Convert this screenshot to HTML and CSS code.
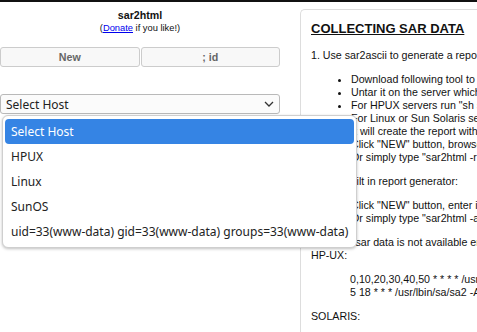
FILE: index.html
```html
<!DOCTYPE html>
<html>
<head>
<meta charset="utf-8">
<title>sar2html</title>
<link rel="stylesheet" href="styles.css">
</head>
<body>
<div class="topbar"></div>
<div class="page">
  <div class="left">
    <div class="title">sar2html</div>
    <div class="donate">(<a href="#">Donate</a> if you like!)</div>
    <div class="buttons">
      <button class="btn">New</button>
      <button class="btn">; id</button>
    </div>
    <div class="host">
      <div class="select">
        <span>Select Host</span>
        <svg class="chev" width="10" height="6" viewBox="0 0 10 6"><path d="M1 1 L5 5 L9 1" fill="none" stroke="#333" stroke-width="1.3"/></svg>
      </div>
      <div class="popup">
        <div class="opt active">Select Host</div>
        <div class="opt">HPUX</div>
        <div class="opt">Linux</div>
        <div class="opt">SunOS</div>
        <div class="opt">uid=33(www-data) gid=33(www-data) groups=33(www-data)</div>
      </div>
    </div>
  </div>
  <div class="panel">
    <h3 class="heading">COLLECTING SAR DATA</h3>
    <p class="para">1. Use sar2ascii to generate a report:</p>
    <ul class="list">
      <li>Download following tool to your server: sar2ascii.tar</li>
      <li>Untar it on the server which you want to collect sar data.</li>
      <li>For HPUX servers run "sh sar2ascii".</li>
      <li>For Linux or Sun Solaris servers run "bash sar2ascii".</li>
      <li>It will create the report with name sar2html-hostname-date.tar.gz under /tmp directory.</li>
      <li>Click "NEW" button, browse and select the report, click "Upload report" button to upload the data.</li>
      <li>Or simply type "sar2html -r sar2html-hostname-date.tar.gz" in command line.</li>
    </ul>
    <p class="para">2. Use built in report generator:</p>
    <ul class="list">
      <li>Click "NEW" button, enter ip address, user name and password of the server.</li>
      <li>Or simply type "sar2html -a" in command line.</li>
    </ul>
    <p class="para">NOTE: If sar data is not available enable sar collection:<br>HP-UX:</p>
    <div class="cron">0,10,20,30,40,50 * * * * /usr/lbin/sa/sa1<br>5 18 * * * /usr/lbin/sa/sa2 -A</div>
    <p class="para">SOLARIS:</p>
  </div>
</div>
</body>
</html>
```
FILE: styles.css
```css
html, body {
  margin: 0;
  padding: 0;
  overflow: hidden;
  background: #fff;
}
body {
  font-family: "Liberation Sans", Arial, sans-serif;
  color: #111;
  width: 477px;
  height: 332px;
}
.topbar {
  height: 2px;
  background: #111;
}
.page {
  display: flex;
  align-items: flex-start;
  gap: 20px;
}
.left {
  width: 280px;
  flex-shrink: 0;
}
.title {
  margin-top: 7px;
  text-align: center;
  font-weight: bold;
  font-size: 8pt;
  line-height: 13px;
}
.donate {
  margin-top: 1px;
  text-align: center;
  font-size: 7pt;
  line-height: 11px;
}
.donate a {
  color: #0000ee;
}
.buttons {
  display: flex;
  gap: 1px;
  margin-top: 13px;
}
.btn {
  flex: 1;
  height: 20px;
  margin: 0;
  padding: 0;
  border: 1px solid #cccccc;
  border-radius: 3px;
  background: #f8f8f8;
  color: #666;
  font-family: "Liberation Sans", Arial, sans-serif;
  font-weight: bold;
  font-size: 8pt;
}
.host {
  position: relative;
  margin-top: 27px;
}
.select {
  height: 20px;
  box-sizing: border-box;
  border: 1px solid #b9b9b9;
  border-radius: 3px;
  background: #fbfbfb;
  display: flex;
  align-items: center;
  justify-content: space-between;
  padding: 0 5px 0 5px;
  font-family: "Noto Sans", sans-serif;
  font-size: 12px;
  color: #222;
}
.chev {
  display: block;
}
.popup {
  position: absolute;
  left: 2px;
  top: 21px;
  width: 355px;
  box-sizing: border-box;
  padding: 3px 2px;
  border: 1px solid #cfcfcf;
  border-radius: 6px;
  background: #fff;
  box-shadow: 0 1px 3px rgba(0, 0, 0, 0.25);
  font-family: "Noto Sans", sans-serif;
  font-size: 12px;
  color: #222;
  z-index: 5;
}
.opt {
  height: 25px;
  line-height: 25px;
  padding-left: 6px;
  white-space: nowrap;
  border-radius: 4px;
}
.opt.active {
  background: #3584e4;
  color: #fff;
}
.panel {
  margin-top: 7px;
  width: 900px;
  min-height: 400px;
  flex-shrink: 0;
  box-sizing: border-box;
  padding: 0 10px;
  border: 1px solid #dddddd;
  border-right: none;
  border-radius: 5px 0 0 0;
  font-size: 8pt;
  line-height: 13px;
  color: #111;
}
.heading {
  font-size: 13px;
  line-height: 15px;
  font-weight: bold;
  text-decoration: underline;
  margin: 11px 0 13px;
}
.para {
  margin: 11px 0;
}
.list {
  margin: 11px 0;
  padding-left: 40px;
}
.cron {
  margin: 11px 0 11px 39px;
}
```
